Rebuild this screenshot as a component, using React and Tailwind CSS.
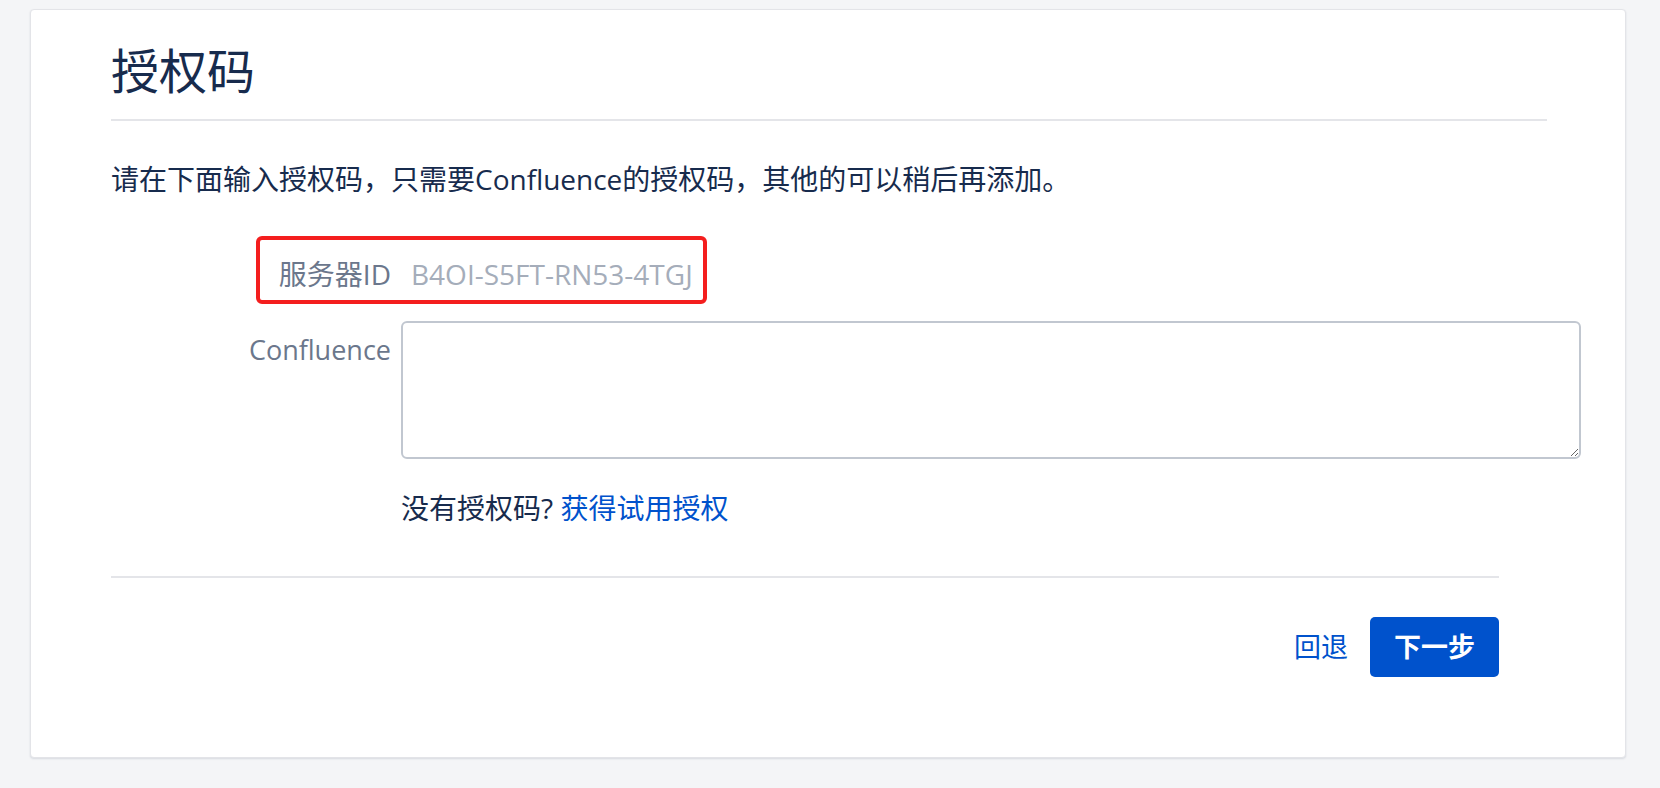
const App = () => {
  return (
    <div className="min-h-screen bg-[#f4f5f7] pt-[9px] pl-[30px] pb-[30px] font-['Open_Sans','Noto_Sans_CJK_SC',sans-serif] text-[#172b4d]">
      <div className="w-[1596px] h-[749px] bg-white border border-[#e3e4e8] rounded-[4px] shadow-[0_1px_2px_rgba(9,30,66,0.12)] pl-[80px] pt-[33px]">
        {/* 标题 */}
        <div className="w-[1436px]">
          <h1 className="text-[48px] leading-[56px] font-normal">授权码</h1>
          <div className="mt-[20px] h-[2px] bg-[#e4e5e9]" />
        </div>

        <p className="mt-[39px] text-[28px] leading-[38px]">
          请在下面输入授权码，只需要Confluence的授权码，其他的可以稍后再添加。
        </p>

        {/* 服务器ID */}
        <div className="relative mt-[38px] h-[68px] flex items-center pt-[7px] text-[28px] leading-[38px]">
          <div className="absolute left-[145px] top-0 w-[451px] h-[68px] border-4 border-[#f41e1e] rounded-[6px]" />
          <span className="w-[280px] text-right text-[#6b778c]">服务器ID</span>
          <span className="ml-[20px] text-[#a5adba]">B4OI-S5FT-RN53-4TGJ</span>
        </div>

        {/* 授权码输入 */}
        <div className="mt-[17px] flex items-start text-[28px] leading-[38px]">
          <label className="w-[280px] pt-[10px] text-right text-[27px] text-[#6b778c]">
            Confluence
          </label>
          <textarea className="ml-[10px] w-[1180px] h-[138px] border-2 border-[#c1c7d0] rounded-[6px] bg-white outline-none" />
        </div>

        <div className="mt-[30px] ml-[290px] text-[28px] leading-[38px]">
          没有授权码?{" "}
          <a href="#" className="text-[#0052cc]">
            获得试用授权
          </a>
        </div>

        {/* 底部按钮 */}
        <div className="w-[1388px]">
          <div className="mt-[49px] h-[2px] bg-[#e4e5e9]" />
          <div className="mt-[39px] flex justify-end items-center gap-[22px] text-[27px]">
            <button className="text-[#0052cc] leading-[38px]">回退</button>
            <button className="w-[129px] h-[60px] rounded-[5px] bg-[#0052cc] text-white font-bold">
              下一步
            </button>
          </div>
        </div>
      </div>
    </div>
  );
};

export default App;
